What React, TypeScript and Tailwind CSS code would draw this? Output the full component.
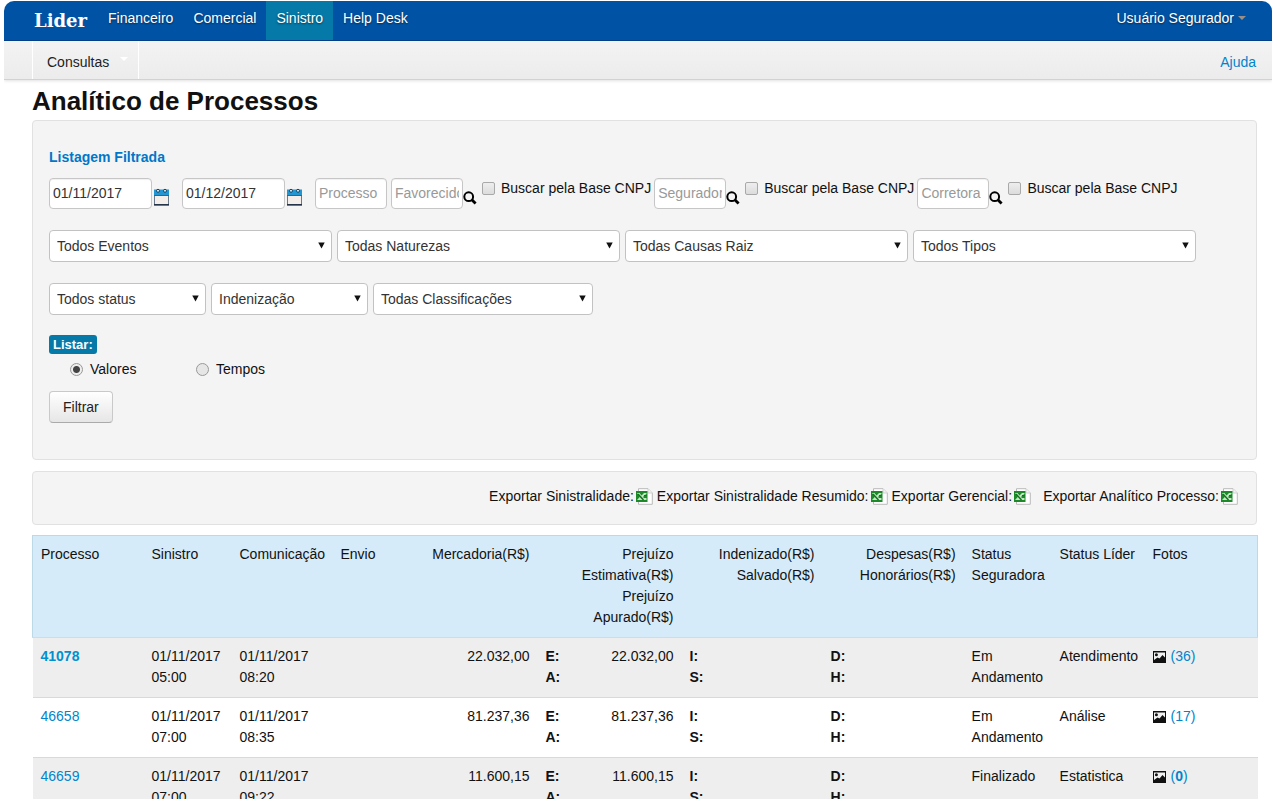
import type { ReactNode } from "react";

type Processo = {
    id: number,
    destaque?: boolean,
    sinistro: [string, string],
    comunicacao: [string, string],
    valor: string,
    statusSeguradora: string,
    statusLider: string,
    fotos: number
}

const processos: Processo[] = [
    { id: 41078, destaque: true, sinistro: ["01/11/2017", "05:00"], comunicacao: ["01/11/2017", "08:20"], valor: "22.032,00", statusSeguradora: "Em Andamento", statusLider: "Atendimento", fotos: 36 },
    { id: 46658, sinistro: ["01/11/2017", "07:00"], comunicacao: ["01/11/2017", "08:35"], valor: "81.237,36", statusSeguradora: "Em Andamento", statusLider: "Análise", fotos: 17 },
    { id: 46659, sinistro: ["01/11/2017", "07:00"], comunicacao: ["01/11/2017", "09:22"], valor: "11.600,15", statusSeguradora: "Finalizado", statusLider: "Estatistica", fotos: 0 },
];

const menu = ["Financeiro", "Comercial", "Sinistro", "Help Desk"];

function CalendarIcon() {
    return (
        <svg width="15" height="18" viewBox="0 0 15 18">
            <rect x="0.5" y="2" width="14" height="15" fill="#f3eeea" stroke="#6b7a8a" />
            <rect x="0" y="2" width="15" height="6" fill="#2196d3" />
            <rect x="0" y="7" width="15" height="1" fill="#1a6c9c" />
            <rect x="0" y="16" width="15" height="1.5" fill="#24344a" />
            <circle cx="4" cy="2.8" r="1.5" fill="#d9effa" stroke="#12425f" />
            <circle cx="11" cy="2.8" r="1.5" fill="#d9effa" stroke="#12425f" />
        </svg>
    )
}

function SearchIcon() {
    return (
        <svg width="14" height="14" viewBox="0 0 14 14" fill="none" stroke="#000">
            <circle cx="5.7" cy="5.7" r="4.4" strokeWidth="2" />
            <path d="M8.8 8.8 L12.6 12.6" strokeWidth="2.8" />
        </svg>
    )
}

function ExcelIcon() {
    return (
        <svg width="17" height="17" viewBox="0 0 17 17">
            <path d="M2.5 0.7 H12 L16.3 5 V16.3 H2.5 Z" fill="#fff" stroke="#b9b9b9" />
            <path d="M12 0.7 V5 H16.3" fill="#f3f3f3" stroke="#cfcfcf" />
            <rect x="0" y="3" width="11.5" height="11" fill="#1c8a28" />
            <path d="M1 5 H3.5 L5.5 7.5 L8 5 H10.5 V6 L7.5 8 V10 H10.5 V12 H1 L4 8.8 Z" fill="#c4e6c4" />
            <path d="M2 6 L7.5 12" stroke="#14701f" strokeWidth="1.5" />
            <path d="M8 7.5 H10.5" stroke="#14701f" />
        </svg>
    )
}

function PictureIcon() {
    return (
        <svg width="13" height="12" viewBox="0 0 13 12" className="mr-[5px] inline-block align-[-2px]">
            <rect width="13" height="12" fill="#111" />
            <path d="M1 1.5 H12 V6.5 L9.5 4 L6.5 7.5 L4.5 6.5 L1 9 Z" fill="#f1f1f1" />
            <circle cx="3.4" cy="3.8" r="1.5" fill="#111" />
        </svg>
    )
}

const inputClass = "h-[31px] rounded-[4px] border border-[#c6c6c6] bg-white px-[3px] pb-px text-[#333] shadow-[inset_0_1px_1px_rgba(0,0,0,0.06)] placeholder:text-[#999]";

function DateField({ label, value }: { label: string, value: string }) {
    return (
        <div className="mr-[13px] flex">
            <input type="text" aria-label={label} defaultValue={value} className={`${inputClass} w-[103px]`} />
            <button type="button" aria-label={`Abrir calendário: ${label}`} className="ml-[2px] mt-[10px] self-start">
                <CalendarIcon />
            </button>
        </div>
    )
}

function SearchField({ placeholder }: { placeholder: string }) {
    return (
        <div className="flex">
            <input type="text" aria-label={placeholder} placeholder={placeholder} className={`${inputClass} w-[72px]`} />
            <button type="button" aria-label={`Pesquisar ${placeholder}`} className="mt-[13px] self-start">
                <SearchIcon />
            </button>
            <label className="ml-[5px] flex h-5 items-center">
                <input type="checkbox" className="mr-[6px] size-[13px] appearance-none rounded-[2px] border border-[#a9a9a9] bg-linear-to-b from-[#eee] to-[#dcdcdc] checked:bg-[#0579a8]" />
                Buscar pela Base CNPJ
            </label>
        </div>
    )
}

function Select({ label, className }: { label: string, className: string }) {
    return (
        <div className={`relative ${className}`}>
            <select aria-label={label} className="h-8 w-full appearance-none rounded-[4px] border border-[#c2c2c2] bg-white px-[7px] text-[#333]">
                <option>{label}</option>
            </select>
            <svg width="7" height="7" viewBox="0 0 8 8" className="pointer-events-none absolute right-[7px] top-3">
                <path d="M0.3 0.5 H7.7 L4 7.5 Z" fill="#111" />
            </svg>
        </div>
    )
}

function Radio({ label, checked }: { label: string, checked?: boolean }) {
    return (
        <label className="flex w-[126px] items-center">
            <input type="radio" name="listar" defaultChecked={checked} className="mr-[7px] size-[13px] appearance-none rounded-full border border-[#999] bg-[#e6e6e6] checked:bg-[radial-gradient(circle,#444_0_3px,#eee_4px)]" />
            {label}
        </label>
    )
}

function Export({ children }: { children: ReactNode }) {
    return (
        <a href="#" className="flex items-center gap-[2px]">
            {children}
            <ExcelIcon />
        </a>
    )
}

function Filtro() {
    return (
        <form className="min-h-[340px] rounded-[4px] border border-[#e1e1e1] bg-[#f4f4f4] px-4 pt-[26px]" onSubmit={e => e.preventDefault()}>
            <h2 className="font-bold leading-[21px] text-[#0077c8]">Listagem Filtrada</h2>
            <div className="mt-[10px] flex flex-wrap gap-y-2">
                <DateField label="Data inicial" value="01/11/2017" />
                <DateField label="Data final" value="01/12/2017" />
                <div className="flex flex-wrap gap-x-[3px] gap-y-2">
                    <input type="text" aria-label="Processo" placeholder="Processo" className={`${inputClass} mr-px w-[72px]`} />
                    <SearchField placeholder="Favorecido" />
                    <SearchField placeholder="Segurador" />
                    <SearchField placeholder="Corretora" />
                </div>
            </div>
            <div className="mt-[21px] flex flex-wrap gap-[5px]">
                <Select label="Todos Eventos" className="w-[283px]" />
                <Select label="Todas Naturezas" className="w-[283px]" />
                <Select label="Todas Causas Raiz" className="w-[283px]" />
                <Select label="Todos Tipos" className="w-[283px]" />
            </div>
            <div className="mt-[21px] flex flex-wrap gap-[5px]">
                <Select label="Todos status" className="w-[157px]" />
                <Select label="Indenização" className="w-[157px]" />
                <Select label="Todas Classificações" className="w-[220px]" />
            </div>
            <fieldset className="mt-5">
                <legend className="rounded-[3px] bg-[#0579a8] px-1 text-[13px] font-bold leading-[19px] text-white">Listar:</legend>
                <div className="mt-[5px] flex pl-[21px] leading-[21px]">
                    <Radio label="Valores" checked />
                    <Radio label="Tempos" />
                </div>
            </fieldset>
            <button type="submit" className="mt-[11px] h-8 rounded-[4px] border border-[#c9c9c9] border-b-[#aaa] bg-linear-to-b from-white to-[#e6e6e6] px-[13px] text-[#222]">Filtrar</button>
        </form>
    )
}

function Tabela() {
    return (
        <table className="mt-[10px] w-full table-fixed leading-[21px]">
            <colgroup>
                <col className="w-[111px]" />
                <col className="w-[88px]" />
                <col className="w-[101px]" />
                <col className="w-[60px]" />
                <col className="w-[145px]" />
                <col className="w-[30px]" />
                <col className="w-[114px]" />
                <col className="w-[30px]" />
                <col className="w-[111px]" />
                <col className="w-[30px]" />
                <col className="w-[111px]" />
                <col className="w-[88px]" />
                <col className="w-[93px]" />
                <col className="w-[113px]" />
            </colgroup>
            <thead>
                <tr className="border border-[#bcd9e8] border-b-[#d9d9d9] bg-[#d5ebf9] text-left align-top [&>th]:px-2 [&>th]:pb-[9px] [&>th]:pt-2 [&>th]:font-normal">
                    <th>Processo</th>
                    <th>Sinistro</th>
                    <th>Comunicação</th>
                    <th>Envio</th>
                    <th className="text-right">Mercadoria(R$)</th>
                    <th colSpan={2} className="text-right">Prejuízo<br />Estimativa(R$)<br />Prejuízo<br />Apurado(R$)</th>
                    <th colSpan={2} className="text-right">Indenizado(R$)<br />Salvado(R$)</th>
                    <th colSpan={2} className="text-right">Despesas(R$)<br />Honorários(R$)</th>
                    <th>Status Seguradora</th>
                    <th>Status Líder</th>
                    <th>Fotos</th>
                </tr>
            </thead>
            <tbody>
                {processos.map(p => (
                    <tr key={p.id} className="border-t border-[#d9d9d9] align-top odd:bg-[#eee] [&>td]:px-2 [&>td]:pb-[9px] [&>td]:pt-2">
                        <td><a href="#" className={p.destaque ? "font-bold text-[#0090d0]" : "text-[#0085cc]"}>{p.id}</a></td>
                        <td>{p.sinistro[0]}<br />{p.sinistro[1]}</td>
                        <td>{p.comunicacao[0]}<br />{p.comunicacao[1]}</td>
                        <td></td>
                        <td className="text-right">{p.valor}</td>
                        <td className="font-bold">E:<br />A:</td>
                        <td className="text-right">{p.valor}</td>
                        <td className="font-bold">I:<br />S:</td>
                        <td></td>
                        <td className="font-bold">D:<br />H:</td>
                        <td></td>
                        <td>{p.statusSeguradora}</td>
                        <td>{p.statusLider}</td>
                        <td>
                            <PictureIcon />
                            <a href="#" className="text-[#0085cc]">({p.fotos === 0 ? <b>0</b> : p.fotos})</a>
                        </td>
                    </tr>
                ))}
            </tbody>
        </table>
    )
}

export default function App() {
    return (
        <div className="h-screen bg-white pb-1 pl-1 pr-2 pt-px font-['Liberation_Sans',Arial,sans-serif] text-[14px] text-[#111]">
            <div className="h-full overflow-hidden">
                <header>
                    <nav className="flex h-10 items-stretch rounded-t-[10px] border-b border-[#00408a] bg-[#0053a4] pl-[30px] pr-[26px] text-white">
                        <a href="#" className="mr-[11px] self-center font-['DejaVu_Serif',serif] text-[18px] font-bold">Lider</a>
                        {menu.map(item => (
                            <a
                                key={item}
                                href="#"
                                className={`px-[10px] pt-[7px] [text-shadow:0_1px_2px_rgba(0,0,0,0.5)] ${item === "Sinistro" ? "bg-[#0579a8]" : ""}`}>
                                {item}
                            </a>
                        ))}
                        <button type="button" className="ml-auto flex items-center gap-1 pb-[5px] [text-shadow:0_1px_2px_rgba(0,0,0,0.5)]">
                            Usuário Segurador
                            <svg width="8" height="4" viewBox="0 0 8 4"><path d="M0 0 H8 L4 4 Z" fill="#9a8f86" /></svg>
                        </button>
                    </nav>
                    <nav className="flex h-[39px] items-stretch justify-between border-b border-[#d2d2d2] bg-linear-to-b from-[#f3f3f3] to-[#ececec] pl-7 pr-4 shadow-[0_1px_3px_rgba(0,0,0,0.12)]">
                        <button type="button" className="flex items-center gap-[11px] border-x border-white px-[14px] pr-[10px] pt-[5px] text-[#222]">
                            Consultas
                            <svg width="8" height="4" viewBox="0 0 8 4" className="mb-2"><path d="M0 0 H8 L4 4 Z" fill="#fff" /></svg>
                        </button>
                        <a href="#" className="self-center pt-[5px] text-[#0085cc]">Ajuda</a>
                    </nav>
                </header>
                <main className="pl-7 pr-[15px]">
                    <h1 className="pb-[3px] pt-[5px] text-[26px] font-bold leading-8 text-[#111]">Analítico de Processos</h1>
                    <Filtro />
                    <div className="mt-[11px] flex min-h-[54px] flex-wrap items-center justify-end gap-x-1 rounded-[4px] border border-[#e1e1e1] bg-[#f4f4f4] pb-[3px] pl-4 pr-[18px]">
                        <Export>Exportar Sinistralidade:</Export>
                        <Export>Exportar Sinistralidade Resumido:</Export>
                        <Export>Exportar Gerencial:</Export>
                        <span className="w-1" />
                        <Export>Exportar Analítico Processo:</Export>
                    </div>
                    <Tabela />
                </main>
            </div>
        </div>
    )
}
